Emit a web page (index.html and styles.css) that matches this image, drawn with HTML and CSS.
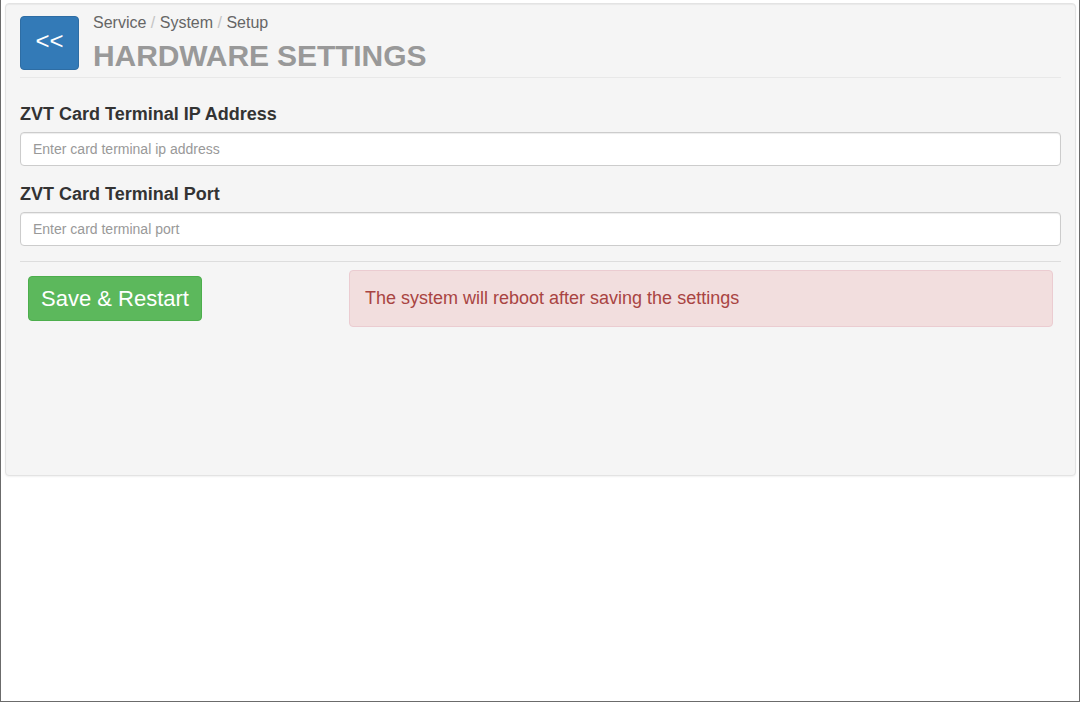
FILE: index.html
```html
<!DOCTYPE html>
<html>
<head>
<meta charset="utf-8">
<link rel="stylesheet" href="styles.css">
</head>
<body>
<div class="page">
  <div class="well">
    <div class="header">
      <button class="back">&lt;&lt;</button>
      <div class="titles">
        <div class="crumbs">Service<span class="sep"> / </span>System<span class="sep"> / </span>Setup</div>
        <h1 class="title">HARDWARE SETTINGS</h1>
      </div>
    </div>
    <div class="field first">
      <label class="label">ZVT Card Terminal IP Address</label>
      <input class="input" type="text" placeholder="Enter card terminal ip address">
    </div>
    <div class="field">
      <label class="label">ZVT Card Terminal Port</label>
      <input class="input" type="text" placeholder="Enter card terminal port">
    </div>
    <div class="divider"></div>
    <div class="actions">
      <button class="save">Save &amp; Restart</button>
      <div class="alert">The system will reboot after saving the settings</div>
    </div>
  </div>
</div>
</body>
</html>
```

FILE: styles.css
```css
* { box-sizing: border-box; }
html, body { margin: 0; padding: 0; background: #fff; }
body { font-family: "Liberation Sans", Arial, sans-serif; color: #333; }
.page {
  width: 1080px;
  height: 702px;
  border: 1px solid #6b6b6b;
  border-top: none;
  padding-top: 3px;
  padding-left: 4px;
  padding-right: 3px;
}
.well {
  height: 473px;
  background: #f5f5f5;
  border: 1px solid #e3e3e3;
  border-radius: 4px;
  box-shadow: inset 0 1px 1px rgba(0,0,0,.05), 0 1px 2px rgba(0,0,0,.06);
  padding: 12px 14px 0 14px;
}
.header {
  display: flex;
  align-items: flex-start;
  border-bottom: 1px solid #e8e8e8;
  height: 62px;
}
.back {
  width: 59px;
  height: 54px;
  background: #337ab7;
  border: 1px solid #2e6da4;
  border-radius: 4px;
  color: #fff;
  font-family: "Liberation Sans", Arial, sans-serif;
  font-size: 24px;
  line-height: 1;
  padding: 0 0 4px 0;
  margin: 0;
  flex: none;
}
.titles { margin-left: 14px; margin-top: -2px; }
.crumbs { font-size: 16px; line-height: 18px; color: #666; }
.sep { color: #c4c4c4; }
.title {
  margin: 6px 0 0 0;
  font-size: 30px;
  line-height: 36px;
  font-weight: bold;
  color: #999;
  letter-spacing: -0.1px;
}
.field { display: flex; flex-direction: column; margin-top: 18px; }
.field.first { margin-top: 26px; }
.label {
  font-size: 18px;
  line-height: 20px;
  font-weight: bold;
  color: #333;
  margin-bottom: 8px;
}
.input {
  height: 34px;
  width: 100%;
  border: 1px solid #ccc;
  border-radius: 4px;
  background: #fff;
  padding: 6px 12px;
  font-family: "Liberation Sans", Arial, sans-serif;
  font-size: 14px;
  color: #555;
  box-shadow: inset 0 1px 1px rgba(0,0,0,.075);
}
.input::placeholder { color: #999; }
.divider { border-top: 1px solid #ddd; margin-top: 15px; }
.actions {
  display: flex;
  align-items: center;
  padding: 0 8px;
  margin-top: 8px;
}
.save {
  flex: none;
  width: 174px;
  height: 45px;
  background: #5cb85c;
  border: 1px solid #4cae4c;
  border-radius: 4px;
  color: #fff;
  font-family: "Liberation Sans", Arial, sans-serif;
  font-size: 22px;
  line-height: 29px;
  padding: 7px 12px;
  margin: 0;
}
.alert {
  flex: 1;
  margin-left: 147px;
  background: #f2dede;
  border: 1px solid #ebccd1;
  border-radius: 4px;
  color: #a94442;
  font-size: 18px;
  line-height: 25px;
  padding: 15px;
}
```
